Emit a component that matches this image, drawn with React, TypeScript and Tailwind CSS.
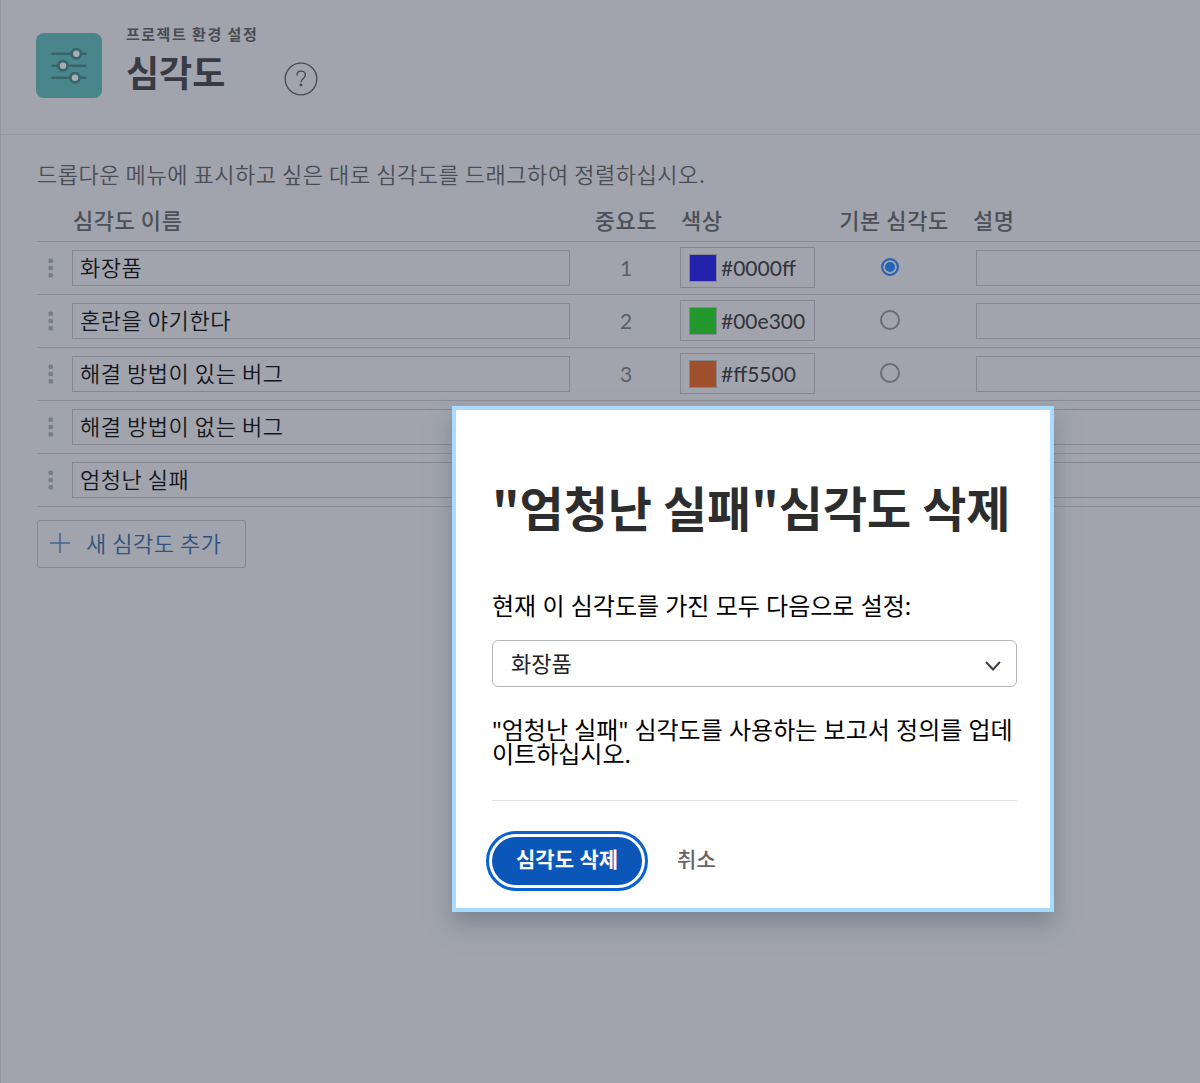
import { useState } from "react";

const severities = [
  { name: "화장품", weight: "1", color: "#0000ff", swatch: "#2222ac" },
  { name: "혼란을 야기한다", weight: "2", color: "#00e300", swatch: "#22982c" },
  { name: "해결 방법이 있는 버그", weight: "3", color: "#ff5500", swatch: "#a04f2d" },
  { name: "해결 방법이 없는 버그", weight: "", color: "", swatch: "#a0782d" },
  { name: "엄청난 실패", weight: "", color: "", swatch: "#a0242d" },
];

function SettingsLogo() {
  return (
    <svg viewBox="0 0 66 66" className="size-[66px] shrink-0" aria-hidden="true">
      <rect width="66" height="65" rx="8" fill="#48868b" />
      <g stroke="#38656c" strokeWidth="2.4" strokeLinecap="round">
        <path d="M16.500 20.700H49.500M16.500 32.700H49.500M16.500 44.700H49.500" />
      </g>
      <g fill="#a9acb4" stroke="#38656c" strokeWidth="2.800">
        <circle cx="40.300" cy="20.700" r="4.600" />
        <circle cx="27" cy="32.700" r="4.600" />
        <circle cx="39" cy="44.700" r="4.600" />
      </g>
    </svg>
  );
}

function HelpIcon() {
  return (
    <svg viewBox="0 0 34 34" className="size-[34px]" fill="none" stroke="#474a54" aria-hidden="true">
      <circle cx="17" cy="17" r="15.800" strokeWidth="1.300" />
      <path d="M12.900 13.400c0-2.700 1.800-4.300 4.200-4.300s4.200 1.600 4.200 3.900c0 3.700-4.400 3.700-4.400 7.300" strokeWidth="1.400" />
      <circle cx="16.900" cy="23" r="1.400" fill="#474a54" stroke="none" />
    </svg>
  );
}

function DragHandle() {
  return (
    <svg viewBox="0 0 6 20" className="ml-[11px] block h-5 w-1.5" fill="#777e8a" aria-hidden="true">
      <rect x="0.500" y="0.500" width="4.500" height="4.500" rx="1.500" />
      <rect x="0.500" y="7.700" width="4.500" height="4.500" rx="1.500" />
      <rect x="0.500" y="15" width="4.500" height="4.500" rx="1.500" />
    </svg>
  );
}

function SeverityTable() {
  const [selected, setSelected] = useState(0);
  return (
    <table className="w-full table-fixed border-collapse text-[22px] leading-8 tracking-wide">
      <colgroup>
        <col className="w-[35px]" />
        <col className="w-[509px]" />
        <col className="w-[90px]" />
        <col className="w-[144px]" />
        <col className="w-[150px]" />
        <col />
      </colgroup>
      <thead>
        <tr className="h-10 border-b border-[#8a8d96] text-left text-[#4d5058]">
          <th aria-label="순서" />
          <th className="p-0 pb-1 pl-px font-medium">심각도 이름</th>
          <th className="p-0 pb-1 text-center font-medium">중요도</th>
          <th className="p-0 pb-1 pl-2.5 font-medium">색상</th>
          <th className="p-0 pb-1 pl-2 text-center font-medium">기본 심각도</th>
          <th className="p-0 pb-1 pl-2 font-medium">설명</th>
        </tr>
      </thead>
      <tbody>
        {severities.map((s, i) => (
          <tr key={s.name} className="h-[53px] border-b border-[#8a8d96]">
            <td className="p-0">
              <DragHandle />
            </td>
            <td className="p-0">
              <input
                aria-label="심각도 이름"
                defaultValue={s.name}
                className="block h-9 w-[498px] border border-[#858892] px-[7px] pb-1 font-[350] text-[#14161c] outline-none"
              />
            </td>
            <td className="p-0 text-center font-[Lato] text-[21px] tracking-normal text-[#5c5f67]">{s.weight}</td>
            <td className="p-0 pl-[9px]">
              <div className="flex h-[41px] w-[135px] items-center gap-1 border border-[#858892] pl-2">
                <span
                  className="size-7 shrink-0 border border-[#858892]"
                  style={{ backgroundColor: s.swatch }}
                />
                <input
                  aria-label="색상"
                  defaultValue={s.color}
                  className="w-full min-w-0 font-[Lato] text-[21px] tracking-normal text-[#30333a] outline-none"
                />
              </div>
            </td>
            <td className="p-0 text-center">
              <input
                type="radio"
                name="default-severity"
                aria-label={s.name}
                checked={selected === i}
                onChange={() => setSelected(i)}
                className="mb-2 inline-block size-5 appearance-none rounded-full border-2 border-[#6a6d76] align-middle checked:size-[18px] checked:border-[#2763b4] checked:bg-[#2763b4] checked:shadow-[inset_0_0_0_2px_#a1a4ac]"
              />
            </td>
            <td className="p-0 pl-[11px]">
              <input
                aria-label="설명"
                className="block h-9 w-full border border-r-0 border-[#858892] px-[7px] text-[#17191f] outline-none"
              />
            </td>
          </tr>
        ))}
      </tbody>
    </table>
  );
}

function DeleteDialog() {
  return (
    <div
      role="dialog"
      aria-modal="true"
      aria-labelledby="dialog-title"
      className="absolute top-[406px] left-[451px] w-[602px] border-4 border-[#a8dbff] bg-white pt-[60px] pr-[33px] pb-[23px] pl-9 font-['Noto_Sans','Noto_Sans_CJK_KR',sans-serif] text-black shadow-[0_12px_20px_rgba(100,115,130,0.600)]"
    >
      <h2
        id="dialog-title"
        className="font-['Noto_Sans_CJK_KR',sans-serif] text-5xl leading-[72px] font-bold whitespace-nowrap text-[#2d2d2d]"
      >
        "엄청난 실패"심각도 삭제
      </h2>
      <label htmlFor="replacement" className="mt-12 block text-2xl leading-8">
        현재 이 심각도를 가진 모두 다음으로 설정:
      </label>
      <div className="relative mt-[18px]">
        <select
          id="replacement"
          defaultValue="화장품"
          className="block h-[47px] w-full appearance-none rounded-md border border-[#b5b5b8] bg-white pl-[18px] text-[22px] text-[#222] outline-none"
        >
          {severities.slice(0, 4).map((s) => (
            <option key={s.name}>{s.name}</option>
          ))}
        </select>
        <svg
          viewBox="0 0 16 10"
          className="pointer-events-none absolute top-[21px] right-4 h-2.5 w-4"
          fill="none"
          stroke="#3b3f4c"
          strokeWidth="2"
          aria-hidden="true"
        >
          <path d="M1 1l7 7.500 7-7.500" />
        </svg>
      </div>
      <p className="mt-[31px] text-2xl leading-6">
        "엄청난 실패" 심각도를 사용하는 보고서 정의를 업데이트하십시오.
      </p>
      <div className="mt-[34px] flex items-center gap-[35px] border-t border-[#e3e3e3] pt-9 text-[21px] font-bold">
        <button className="h-12 rounded-full bg-[#0b57b9] px-6 pb-0.5 text-white ring-3 ring-white outline-3 outline-offset-3 outline-[#0862d1]">
          심각도 삭제
        </button>
        <button className="pb-0.5 font-medium text-[#666]">취소</button>
      </div>
    </div>
  );
}

export default function App() {
  return (
    <div className="relative min-h-screen overflow-hidden border-l border-[#92959e] bg-[#a1a4ac] font-['Noto_Sans_CJK_KR',sans-serif]">
      <header className="flex h-[135px] border-b border-[#9699a2] pt-[33px] pl-[35px]">
        <SettingsLogo />
        <div className="-mt-[11px] ml-6">
          <p className="text-[15px] leading-6 font-bold tracking-widest text-[#484b53]">프로젝트 환경 설정</p>
          <h1 className="text-4xl leading-[50px] font-bold text-[#383a44]">심각도</h1>
        </div>
        <button aria-label="도움말" className="mt-[29px] ml-[26px] size-[34px]">
          <HelpIcon />
        </button>
      </header>
      <main className="pt-[22px] pl-9">
        <p className="text-[22px] leading-8 font-[350] tracking-wide text-[#4a4d55]">
          드롭다운 메뉴에 표시하고 싶은 대로 심각도를 드래그하여 정렬하십시오.
        </p>
        <div className="mt-3">
          <SeverityTable />
        </div>
        <button className="mt-[13px] flex h-12 w-[209px] items-center gap-4 rounded-[3px] border border-[#858892] pb-0.5 pl-3 text-[22px] font-[350] tracking-wide text-[#2f527f]">
          <svg viewBox="0 0 20 20" className="size-5" stroke="#42618c" strokeWidth="1.500" aria-hidden="true">
            <path d="M10 0V20M0 10H20" />
          </svg>
          새 심각도 추가
        </button>
      </main>
      <DeleteDialog />
    </div>
  );
}
